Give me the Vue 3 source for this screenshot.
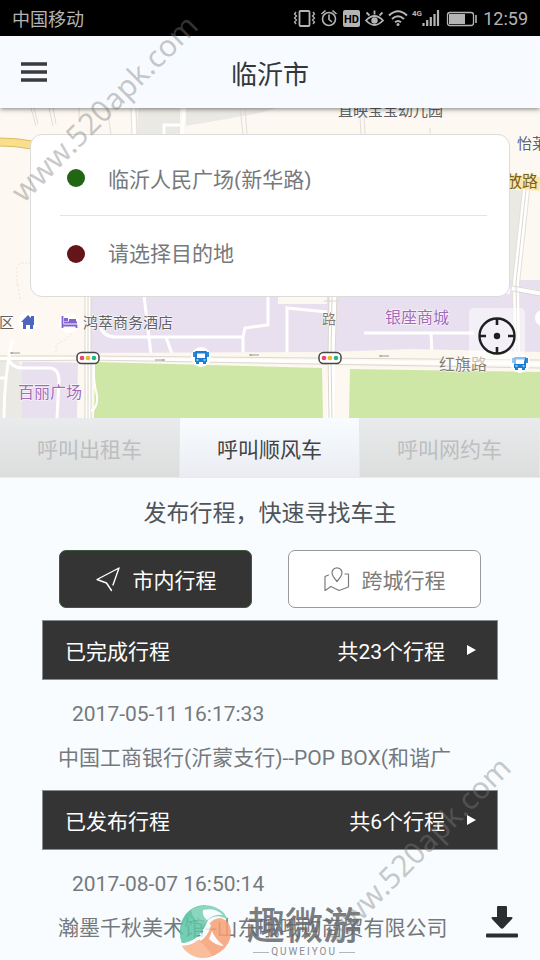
<script setup>
import { ref } from 'vue'

const start = ref('临沂人民广场(新华路)')
const destination = ref('')
const tabs = ['呼叫出租车', '呼叫顺风车', '呼叫网约车']
const activeTab = ref(1)
const scope = ref('city')
const trips = [
  { title: '已完成行程', count: '共23个行程', date: '2017-05-11 16:17:33', route: '中国工商银行(沂蒙支行)--POP BOX(和谐广' },
  { title: '已发布行程', count: '共6个行程', date: '2017-08-07 16:50:14', route: '瀚墨千秋美术馆--山东哦哦购商贸有限公司' }
]
</script>

<template>
  <div class="screen">
    <div class="status">
      <span class="carrier">中国移动</span>
      <svg class="status-icons" width="186" height="24" viewBox="292 6 186 24" fill="none" stroke="#b4b4b4" stroke-width="1.6">
        <rect x="300.5" y="11" width="10" height="15" rx="1" stroke-width="1.8" />
        <path d="M297 12l-1.500 2 2 2-2 2 2 2-2 2 1.500 2M314 12l1.500 2-2 2 2 2-2 2 2 2-1.500 2" stroke-width="1.3" />
        <circle cx="330" cy="19" r="6.5" />
        <path d="M330 14.500v5l3 2.500M322.500 14l4-3.500M337.500 14l-4-3.500" />
        <rect x="344" y="10" width="17" height="17" rx="2" fill="#b4b4b4" stroke="none" />
        <text x="352.5" y="22.5" text-anchor="middle" class="hd">HD</text>
        <path d="M367 20.500q8.500-9 17 0q-8.500 9-17 0zM367.500 12.500l3 3M375.500 10.500v4M383.500 12.500l-3 3" stroke-width="1.8" />
        <circle cx="375.5" cy="20.5" r="3.2" fill="#b4b4b4" stroke="none" />
        <path d="M390 15.500q9-8.500 18 0M393 19q6-5.500 12 0M396 22.300q3-2.600 6 0" stroke-width="2" />
        <circle cx="399" cy="24.5" r="1.5" fill="#b4b4b4" stroke="none" />
        <text x="413" y="16" class="net">4G</text>
        <path d="M424.500 26v-3M428.200 26v-6M431.800 26v-9M435.500 26v-12M439 26v-16" stroke-width="2.2" />
        <rect x="448.5" y="12.5" width="26" height="13" rx="2.5" stroke-width="1.3" />
        <rect x="450" y="14" width="16" height="10" fill="#b4b4b4" stroke="none" />
        <path d="M477 15v8" />
      </svg>
      <span class="clock">12:59</span>
    </div>

    <header class="topbar">
      <button class="menu" type="button" aria-label="菜单">
        <svg width="26" height="20" viewBox="0 0 26 20"><path d="M0 2h26M0 10h26M0 18h26" stroke="#3b3b3d" stroke-width="3.4" /></svg>
      </button>
      <h1>临沂市</h1>
    </header>

    <section class="map">
      <svg class="map-art" viewBox="0 108 540 310" preserveAspectRatio="xMidYMid slice">
        <rect y="108" width="540" height="310" fill="#fdf9f2" />
        <path d="M138 108h42v26h-43zM186 108h90l-16 5-74 13z" fill="#ebe9e4" />
        <path d="M184 108l-2 26M180 125h-16v9M133 108l1 26" fill="none" stroke="#fff" stroke-width="3" />
        <path d="M31 108l5 18M34 108l4 16M49 108l4 18M53 108l3 16M79 108v12M107 108l4 26M131 108l1 26M136 108l1 26M240 108l3 26M245 108l2 26M360 116l1 18M364 116l1 18M430 128v6" fill="none" stroke="#e2ded6" stroke-width="1" />
        <path d="M0 142q16 0 32 3" fill="none" stroke="#d9bd67" stroke-width="9" />
        <path d="M0 142q16 0 32 3" fill="none" stroke="#f9df8c" stroke-width="7" />
        <path d="M508 181l32 3" stroke="#fae7a6" stroke-width="14" />
        <path d="M509 190h14l-10 93h-4z" fill="#ebe9e4" />
        <path d="M90 294h448v59H90zM510 280h30v80h-30z" fill="#e9e0ef" />
        <path d="M22 362h56v56H22z" fill="#e9e0ef" />
        <path d="M0 356h14l8 10v52H0z" fill="#ebe9e4" />
        <path d="M278 296h49v8h-49z" fill="#fdf9f2" />
        <path d="M526 190l-10 93 1 70" fill="none" stroke="#e4e0d8" stroke-width="8" />
        <path d="M526 190l-10 93 1 70" fill="none" stroke="#fff" stroke-width="6" />
        <path d="M512 288l28 5" stroke="#fff" stroke-width="5" />
        <path d="M526 190l-10 93 1 70M513 286l27 5M513 291l27 5" fill="none" stroke="#dcd8d0" stroke-width="1" />
        <path d="M144 296l7 58M100 326q3 11 16 11h127l2-9 23-3v-29M243 337v18M166 337l6 17M287 355v-47l40 4M364 333h110M431 333l1 22" fill="none" stroke="#fff" stroke-width="3" />
        <path d="M17 285v-17q0-5 7-5h8M18 285l2 15M56 352v-5q0-3 8-6l10-10" fill="none" stroke="#e8e4dd" stroke-width="1" stroke-dasharray="2 2" />
        <path d="M0 353h80l250-1 80-3 130 3v20l-200-5-250-4-90-2z" fill="#fcf8f0" />
        <path d="M0 358l540 6" fill="none" stroke="#fff" stroke-width="3" />
        <path d="M0 356h90l450 4M0 361l90-1 450 8" fill="none" stroke="#dcd8cf" stroke-width="1" />
        <path d="M12 340q-8 38-8 78M8 358q3 10 16 10h26q9 1 9 13l-2 37M0 378h5" fill="none" stroke="#fff" stroke-width="3" />
        <path d="M78 362h17v56H77zM323 368h26v50h-25z" fill="#fdf9f2" />
        <path d="M85 296h6v122h-6zM329 296h8l-3 122h-7z" fill="#fff" />
        <path d="M85 296v122M88 296v122M91 296v122M329 296l-1 60 1 62M332 296l-1 60 1 62M337 296l-2 60M324 301h14" fill="none" stroke="#dcd6ca" stroke-width="1" />
        <path d="M95 362l227 6 1 50H94zM350 369l190 3v46H349z" fill="#cee7a6" />
        <path d="M94 364q-1 16 3 32 1 12-6 15" fill="none" stroke="#fff" stroke-width="2" />
        <path d="M10 353h10m-8-1v2M155 360h10m-2-1v2M249 355h10m-8-1v2M379 356h10m-8-1v2" stroke="#9b9993" stroke-width="1" />
        <g class="poi">
          <text x="338" y="116" font-size="15">直映宝宝幼儿园</text>
          <text x="517" y="149" font-size="15">怡莱</text>
          <text x="-1" y="328" font-size="15">区</text>
          <text x="83" y="328" font-size="15">鸿萃商务酒店</text>
          <text x="322" y="324" font-size="14" class="road">路</text>
          <text x="439" y="370" font-size="16" class="road">红旗路</text>
          <text x="506" y="187" font-size="16" class="main-road">放路</text>
          <text x="385" y="323" font-size="16" class="mall">银座商城</text>
          <text x="18" y="398" font-size="16" class="mall">百丽广场</text>
        </g>
        <circle cx="28" cy="322" r="10" fill="#fff" />
        <path d="M21 322l7-7 3 3v-2h3v9h-1v4h-3v-4h-4v4h-3v-7z" fill="#4c65bd" />
        <circle cx="69" cy="323" r="10" fill="#fff" />
        <path d="M62.500 316v12M62.500 325.500h14v2.500M64 322.500h13" fill="none" stroke="#8262ce" stroke-width="1.8" />
        <path d="M64 318h4v3h-4zM69 319h7v3h-7z" fill="#8262ce" />
        <g v-for="x in [88, 330]" :key="x">
          <rect :x="x - 11" y="352.5" width="22" height="11" rx="4.5" fill="#fff" stroke="#454545" stroke-width="1.5" />
          <circle :cx="x - 6" cy="358" r="2.3" fill="#e94767" />
          <circle :cx="x" cy="358" r="2.3" fill="#f2b52b" />
          <circle :cx="x + 6" cy="358" r="2.3" fill="#23b781" />
        </g>
        <g v-for="p in [[201, 357], [520, 363]]" :key="p[0]">
          <circle :cx="p[0]" :cy="p[1]" r="10" fill="#fff" />
          <g :transform="`translate(${p[0]} ${p[1]})`">
            <path d="M-5-6H5q1 0 1 1V5H5V7H2V5h-4v2h-3V5h-1V-5q0-1 1-1z" fill="#187fd5" />
            <path d="M-7-5v5M7-5v5" stroke="#187fd5" stroke-width="1.8" />
            <path d="M-4-3.500h8V1h-8z" fill="#fff" />
            <path d="M-4.500 3h2M2.500 3h2" stroke="#fff" />
          </g>
        </g>
        <circle cx="543" cy="318" r="8" fill="#fff" />
      </svg>

      <div class="route-card">
        <label class="place">
          <i class="dot from"></i>
          <input v-model="start" type="text" aria-label="出发地">
        </label>
        <label class="place">
          <i class="dot to"></i>
          <input v-model="destination" type="text" placeholder="请选择目的地" aria-label="目的地">
        </label>
      </div>

      <button class="locate" type="button" aria-label="定位">
        <svg width="40" height="40" viewBox="-20 -20 40 40">
          <circle r="17.5" fill="none" stroke="#1f1f21" stroke-width="2.4" />
          <path d="M0-17v6M0 17v-6M-17 0h6M17 0h-6" stroke="#1f1f21" stroke-width="2.6" />
          <circle r="3.2" fill="#1f1f21" />
        </svg>
      </button>
    </section>

    <nav class="tabs">
      <button v-for="(tab, i) in tabs" :key="tab" type="button" :class="{ active: i === activeTab }" @click="activeTab = i">{{ tab }}</button>
    </nav>

    <main>
      <h2>发布行程，快速寻找车主</h2>
      <div class="scopes">
        <button type="button" :class="{ chosen: scope === 'city' }" @click="scope = 'city'">
          <svg width="26" height="26" viewBox="0 0 26 26" fill="none" stroke="currentColor" stroke-width="1.4" stroke-linejoin="round" stroke-linecap="round">
            <path d="M18 19l6-17L2 13.500l9.500 3.500 5 7.500" />
          </svg>
          市内行程
        </button>
        <button type="button" :class="{ chosen: scope === 'intercity' }" @click="scope = 'intercity'">
          <svg width="26" height="26" viewBox="0 0 26 26" fill="none" stroke="currentColor" stroke-width="1.2" stroke-linejoin="round" stroke-linecap="round">
            <path d="M13 15.500C9.500 11.500 8 9.300 8 6.800a5 5 0 0 1 10 0c0 2.500-1.500 4.700-5 8.700zM4.500 9L1 10.500v14l6-4 8 4 9.500-3.500V8H21" />
          </svg>
          跨城行程
        </button>
      </div>

      <section v-for="trip in trips" :key="trip.title" class="trip">
        <button class="trip-bar" type="button">
          <span>{{ trip.title }}</span>
          <span class="count">{{ trip.count }}</span>
          <svg width="9" height="10" viewBox="0 0 9 10"><path d="M0 0l9 5-9 5z" fill="#fff" /></svg>
        </button>
        <time>{{ trip.date }}</time>
        <p>{{ trip.route }}</p>
      </section>
    </main>

    <button class="download" type="button" aria-label="下载">
      <svg width="34" height="34" viewBox="0 0 34 34" fill="#2b2e31">
        <path d="M12 2q0-1 1-1h8q1 0 1 1v10h4q2.500 0 1 2l-8.500 9q-1.500 1.500-3 0L7 14q-1.500-2 1-2h4z" />
        <rect x="1" y="28.500" width="32" height="4" rx="1" />
      </svg>
    </button>

    <div class="brand">
      <svg width="54" height="54" viewBox="0 0 54 54">
        <path d="M27 1C12 1 1 12 1 28q0 6 2 11 11-1 18-9 5-6 8-14l-7-6z" fill="#4fbd9a" />
        <path d="M1 28q1-8 9-16 8 8 15 8l-5 11Q12 38 3 39q-2-5-2-11z" fill="#5fc6a6" />
        <path d="M12 6Q30-5 45 9l4 7q-10-7-19-1l-6 6Q14 17 12 6z" fill="#7bd0b3" />
        <path d="M24 6q12-3 20 5-9-1-16 5-5-4-4-10z" fill="#f8fcff" />
        <path d="M3 42q17-1 22-13Q31 14 42 14q9 3 10 13 0 14-11 21-11 8-23 5Q8 50 3 42z" fill="#f8a075" />
        <path d="M3 42q9 0 16-6 6 4 14 15-8 4-16 2Q8 50 3 42z" fill="#fbb48c" />
        <path d="M33 27q3 8 12 15-8 0-15-7zM20 33q5-5 9-15l3 3q-3 12-11 16z" fill="#f8fcff" />
      </svg>
      <div class="brand-name">
        <strong>趣微游</strong>
        <small>QUWEIYOU</small>
      </div>
    </div>
    <span class="mark mark-top">www.520apk.com</span>
    <span class="mark mark-bottom">www.520apk.com</span>
  </div>
</template>

<style>
body {
  background: #f8fcff;
}
</style>

<style scoped>
.screen {
  position: relative;
  overflow: hidden;
  background: #f8fcff;
  color: #76797c;
  font-family: Roboto, "Noto Sans CJK SC", sans-serif;
  font-size: 21px;
  font-weight: 400;
}
button,
input {
  margin: 0;
  padding: 0;
  border: 0;
  background: none;
  color: inherit;
  font: inherit;
}
button {
  cursor: pointer;
}
svg {
  display: block;
  flex: none;
}
.status {
  display: flex;
  align-items: center;
  height: 36px;
  padding: 0 12px;
  background: #000;
  color: #b4b4b4;
  font-size: 18px;
}
.carrier {
  flex: 1;
}
.clock {
  margin-left: 6px;
}
.hd {
  fill: #000;
  stroke: none;
  font-size: 11px;
  font-weight: 700;
}
.net {
  fill: #b4b4b4;
  stroke: none;
  font-size: 8px;
  font-weight: 700;
}
.topbar {
  position: relative;
  z-index: 2;
  display: grid;
  grid-template-columns: 1fr auto 1fr;
  align-items: center;
  height: 72px;
  padding: 0 21px;
  background: #f7fbff;
  box-shadow: 0 1px 5px rgba(0, 0, 0, 0.5);
}
.menu {
  justify-self: start;
}
h1 {
  margin: 0;
  color: #34373a;
  font-size: 26px;
  font-weight: 400;
}
.map {
  position: relative;
  display: flex;
  flex-direction: column;
  height: 310px;
  box-sizing: border-box;
  padding: 26px 30px 0;
}
.map-art {
  position: absolute;
  inset: 0;
  width: 100%;
  height: 100%;
}
.poi text {
  fill: #606165;
  stroke: #fff;
  stroke-width: 1px;
  paint-order: stroke;
}
.poi .road {
  fill: #857c70;
}
.poi .main-road {
  fill: #7c6222;
  stroke: #fae7a6;
}
.poi .mall {
  fill: #a069ba;
}
.route-card {
  position: relative;
  padding: 5px 22px 5px 29px;
  border: 1px solid #dcdcdc;
  border-radius: 12px;
  background: #fff;
}
.place {
  display: flex;
  align-items: center;
  gap: 23px;
  height: 75px;
  padding-left: 7px;
}
.place + .place {
  border-top: 1px solid #e4e4e4;
}
.dot {
  width: 18px;
  height: 18px;
  border-radius: 50%;
}
.from {
  background: #226614;
}
.to {
  background: #641519;
}
.place input {
  flex: 1;
  min-width: 0;
  outline: 0;
}
.place input::placeholder {
  color: inherit;
  opacity: 1;
}
.locate {
  position: absolute;
  right: 15px;
  bottom: 54px;
  display: grid;
  place-items: center;
  width: 56px;
  height: 56px;
  border-radius: 5px;
  background: rgba(255, 255, 255, 0.5);
}
.tabs {
  display: grid;
  grid-template-columns: repeat(3, 1fr);
}
.tabs button {
  height: 60px;
  border-right: 1px solid #e6e8ea;
  border-bottom: 1px solid #e8eaec;
  background: linear-gradient(#e9ebec, #dcdddd);
  color: #bcbebf;
}
.tabs .active {
  background: linear-gradient(#f8fcff, #eaecf1);
  color: #414447;
}
h2 {
  margin: 0;
  padding: 20px 0;
  color: #505457;
  font-size: 23px;
  font-weight: 400;
  line-height: 32px;
  text-align: center;
}
.scopes {
  display: grid;
  grid-template-columns: 1fr 1fr;
  gap: 36px;
  padding: 0 59px 12px;
}
.scopes button {
  display: flex;
  align-items: center;
  justify-content: center;
  gap: 12px;
  height: 58px;
  border: 1px solid #97999b;
  border-radius: 7px;
  background: #fff;
  color: #7c7c7c;
}
.scopes .chosen {
  border-color: #3d5a3c;
  background: #343434;
  color: #fff;
}
.trip {
  padding: 0 42px 17px;
}
.trip-bar {
  display: flex;
  align-items: center;
  width: 100%;
  height: 60px;
  padding: 0 21px 0 22px;
  border: 1px solid #8a8d8f;
  background: #343434;
  color: #fff;
}
.count {
  margin: 0 22px 0 auto;
}
time {
  display: block;
  padding: 19px 30px 14px;
  line-height: 30px;
}
p {
  margin: 0;
  padding-left: 16px;
  line-height: 30px;
  white-space: nowrap;
}
.download {
  position: absolute;
  right: 21px;
  bottom: 21px;
}
.brand {
  position: absolute;
  bottom: 2px;
  left: 50%;
  display: flex;
  align-items: center;
  gap: 14px;
  transform: translateX(-50%);
  opacity: 0.85;
  pointer-events: none;
}
.brand-name {
  display: flex;
  flex-direction: column;
  align-items: center;
}
strong {
  color: #66696c;
  font-size: 38px;
  font-weight: 500;
  line-height: 42px;
}
small {
  display: flex;
  align-items: center;
  gap: 2px;
  font-size: 10px;
  line-height: 10px;
  letter-spacing: 2px;
}
small::before,
small::after {
  width: 16px;
  height: 1px;
  background: #a9acae;
  content: "";
}
.mark {
  position: absolute;
  z-index: 3;
  color: rgba(125, 125, 125, 0.42);
  font-family: "Noto Sans", sans-serif;
  font-size: 30px;
  line-height: 40px;
  transform: translate(-50%, -50%) rotate(-45deg);
  pointer-events: none;
}
.mark-top {
  top: 108px;
  left: 104px;
}
.mark-bottom {
  top: 850px;
  left: 417px;
}
</style>
